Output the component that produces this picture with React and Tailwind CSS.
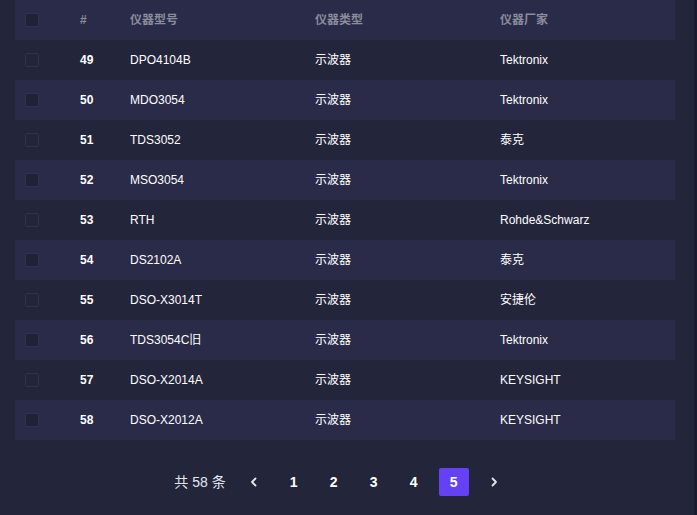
import React from "react";

const rows = [
  { id: 49, model: "DPO4104B", type: "示波器", vendor: "Tektronix" },
  { id: 50, model: "MDO3054", type: "示波器", vendor: "Tektronix" },
  { id: 51, model: "TDS3052", type: "示波器", vendor: "泰克" },
  { id: 52, model: "MSO3054", type: "示波器", vendor: "Tektronix" },
  { id: 53, model: "RTH", type: "示波器", vendor: "Rohde&Schwarz" },
  { id: 54, model: "DS2102A", type: "示波器", vendor: "泰克" },
  { id: 55, model: "DSO-X3014T", type: "示波器", vendor: "安捷伦" },
  { id: 56, model: "TDS3054C旧", type: "示波器", vendor: "Tektronix" },
  { id: 57, model: "DSO-X2014A", type: "示波器", vendor: "KEYSIGHT" },
  { id: 58, model: "DSO-X2012A", type: "示波器", vendor: "KEYSIGHT" },
];

const grid = "grid grid-cols-[55px_50px_185px_185px_1fr] items-center h-[40px] pl-[10px]";

function Checkbox({ dark }) {
  return (
    <span
      className={`block w-[14px] h-[14px] rounded-[2px] border border-[#30324f] ${
        dark ? "bg-[#202139]" : "bg-transparent"
      }`}
    />
  );
}

function Chevron({ dir }) {
  return (
    <svg width="10" height="10" viewBox="0 0 10 10" fill="none">
      <path
        d={dir === "left" ? "M6.5 1.5 3 5l3.5 3.5" : "M3.5 1.5 7 5 3.5 8.5"}
        stroke="#e5e7f0"
        strokeWidth="1.8"
        strokeLinecap="round"
        strokeLinejoin="round"
      />
    </svg>
  );
}

export default function App() {
  return (
    <div
      className="flex w-[697px] h-[515px] bg-[#23253b] text-[12px] text-white overflow-hidden"
      style={{ fontFamily: '"Liberation Sans", Arial, "Noto Sans CJK SC", sans-serif' }}
    >
      <div className="flex-1 flex flex-col">
        {/* Table */}
        <div className="ml-[15px] w-[660px]">
          <div className={`${grid} bg-[#292b48] text-[#8b8c9e] font-bold`}>
            <Checkbox dark />
            <span>#</span>
            <span>仪器型号</span>
            <span>仪器类型</span>
            <span>仪器厂家</span>
          </div>
          {rows.map((r, i) => (
            <div key={r.id} className={`${grid} ${i % 2 ? "bg-[#292b48]" : "bg-[#23253b]"}`}>
              <Checkbox dark={i % 2 === 1} />
              <span className="font-bold">{r.id}</span>
              <span>{r.model}</span>
              <span>{r.type}</span>
              <span>{r.vendor}</span>
            </div>
          ))}
        </div>

        {/* Pagination */}
        <div className="flex items-center justify-center gap-[10px] mt-[28px] pr-[11px] text-[14px]">
          <span className="mr-[3px] text-[#e5e7f0]">共 58 条</span>
          <button className="w-[30px] h-[28px] flex items-center justify-center">
            <Chevron dir="left" />
          </button>
          {[1, 2, 3, 4, 5].map((n) => (
            <button
              key={n}
              className={`w-[30px] h-[28px] flex items-center justify-center rounded-[2px] font-bold ${
                n === 5 ? "bg-[#6441f5] text-white" : "text-white"
              }`}
            >
              {n}
            </button>
          ))}
          <button className="w-[30px] h-[28px] flex items-center justify-center">
            <Chevron dir="right" />
          </button>
        </div>
      </div>
      <div className="w-[3px] bg-[#1a1b2c]" />
    </div>
  );
}
